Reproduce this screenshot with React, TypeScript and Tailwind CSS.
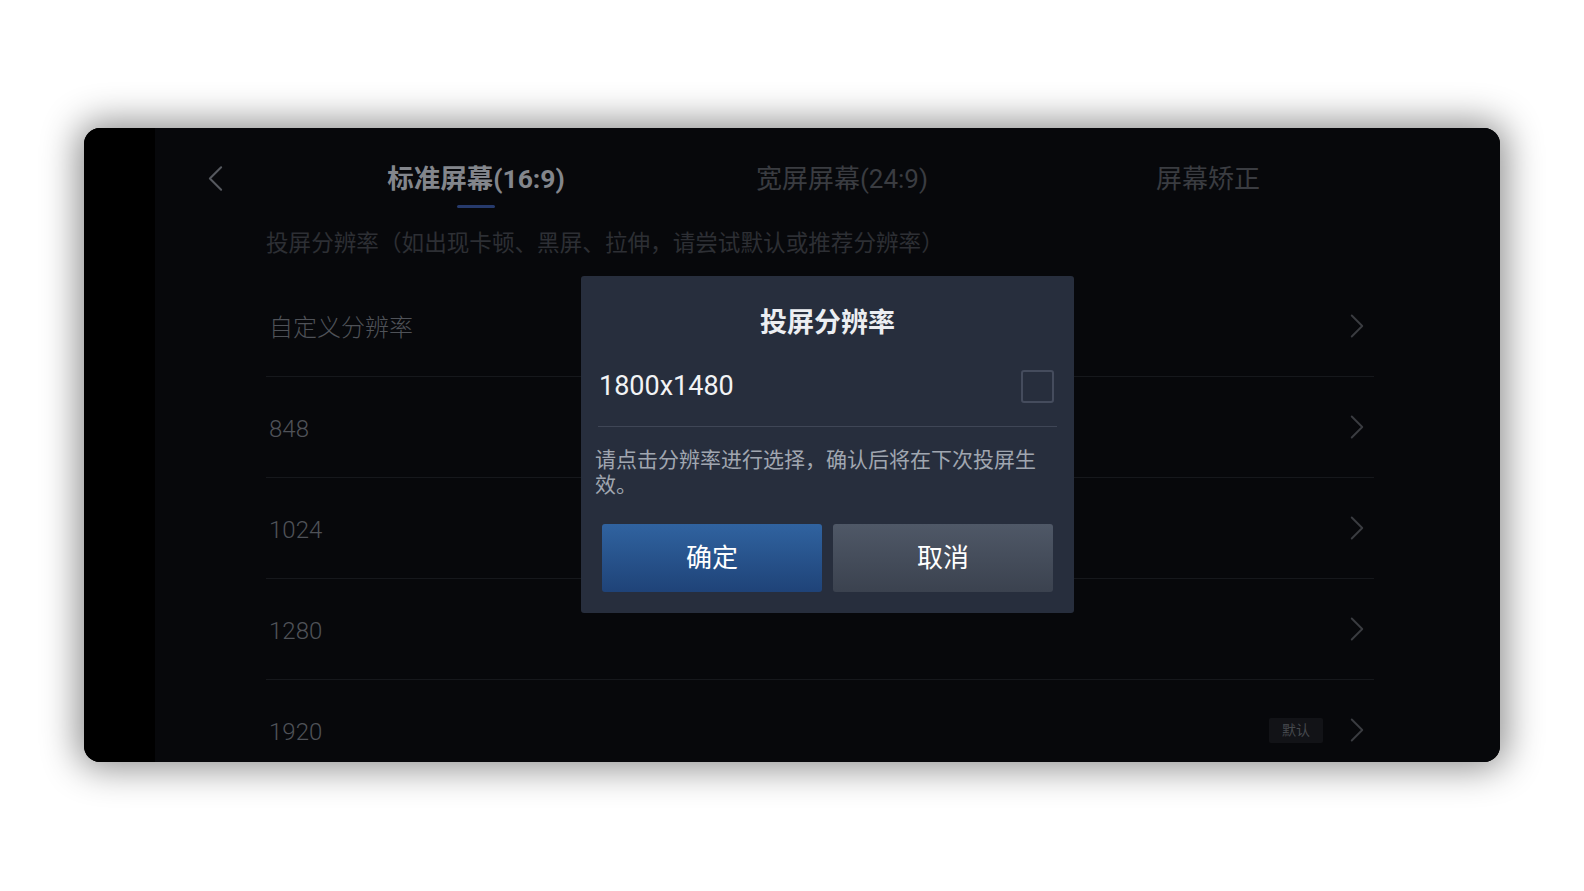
import React from "react";

const FONT = { fontFamily: 'Roboto, "Noto Sans CJK SC", "Noto Sans", sans-serif' };

const tabs = [
  { label: "标准屏幕(16:9)", active: true },
  { label: "宽屏屏幕(24:9)", active: false },
  { label: "屏幕矫正", active: false },
];

const rows = [
  { label: "自定义分辨率" },
  { label: "848" },
  { label: "1024" },
  { label: "1280" },
  { label: "1920", badge: "默认" },
];

function Chevron({ dir, className }: { dir: "left" | "right"; className?: string }) {
  return (
    <svg viewBox="0 0 16 28" className={className} fill="none" stroke="currentColor" strokeWidth={2.2} strokeLinecap="round" strokeLinejoin="round">
      {dir === "left" ? <path d="M14 2 L2 14 L14 26" /> : <path d="M2 2 L14 14 L2 26" />}
    </svg>
  );
}

function ResolutionDialog() {
  return (
    <div className="absolute left-[426px] top-[148px] flex w-[493px] flex-col rounded-[3px] bg-[#272e3d] px-[17px] pb-[21px]">
      <div className="pt-[29px] text-center text-[27px] font-bold leading-[36px] text-[#eceef2]">投屏分辨率</div>
      <div className="mt-[27px] flex items-center justify-between border-b border-[#3f4656] pb-[22px] pl-[1px] pr-[3px]">
        <span className="text-[27px] leading-[36px] text-[#f2f3f5]">1800x1480</span>
        <span className="h-[33px] w-[33px] rounded-[3px] border-2 border-[#454c5d]" />
      </div>
      <p className="-ml-[3px] mt-[21px] text-[21px] leading-[25px] text-[#a0a6b0]">
        请点击分辨率进行选择，确认后将在下次投屏生效。
      </p>
      <div className="mt-[26px] flex gap-[11px] px-[4px]">
        <button className="h-[68px] flex-1 rounded-[3px] bg-gradient-to-b from-[#3063a0] to-[#1f4378] text-[26px] text-white">
          确定
        </button>
        <button className="h-[68px] flex-1 rounded-[3px] bg-gradient-to-b from-[#4f5867] to-[#3b424f] text-[26px] text-white">
          取消
        </button>
      </div>
    </div>
  );
}

export default function App() {
  return (
    <div className="h-[891px] w-[1584px] overflow-hidden bg-white pl-[84px] pt-[128px]" style={FONT}>
      <div className="flex h-[634px] w-[1416px] overflow-hidden rounded-[16px] bg-black shadow-[0_0_36px_6px_rgba(0,0,0,0.45)]">
        <div className="w-[71px] shrink-0 bg-black" />
        <div className="relative flex flex-1 flex-col bg-[#07080b]">
          <div className="flex h-[86px] shrink-0 items-start">
            <div className="w-[138px] shrink-0 pl-[53px] pt-[37px]">
              <Chevron dir="left" className="h-[27px] w-[15px] text-[#55585e]" />
            </div>
            {tabs.map((t) => (
              <div key={t.label} className="flex w-[366px] flex-col items-center pt-[33px]">
                <span
                  className={
                    t.active
                      ? "text-[26.5px] font-bold leading-[36px] text-[#83868c]"
                      : "text-[26px] leading-[36px] text-[#3a3c41]"
                  }
                >
                  {t.label}
                </span>
                {t.active && <span className="mt-[8px] h-[3px] w-[38px] rounded-full bg-[#263a6c]" />}
              </div>
            ))}
          </div>
          <div className="mt-[15px] pl-[111px] text-[22.6px] leading-[30px] text-[#2d2f34]">
            投屏分辨率（如出现卡顿、黑屏、拉伸，请尝试默认或推荐分辨率）
          </div>
          <div className="mt-[17px] flex flex-col pl-[111px] pr-[126px]">
            {rows.map((r) => (
              <div key={r.label} className="flex h-[101px] shrink-0 items-center border-b border-[#16181c]">
                <span className="flex-1 pl-[3px] pt-[3px] text-[24px] font-light text-[#4f5258]">{r.label}</span>
                {r.badge && (
                  <span className="mr-[27px] flex h-[25px] w-[54px] items-center justify-center rounded-[2px] bg-[#121317] text-[14px] text-[#45484d]">
                    {r.badge}
                  </span>
                )}
                <Chevron dir="right" className="mr-[10px] h-[28px] w-[14px] text-[#3a3c41]" />
              </div>
            ))}
          </div>
          <ResolutionDialog />
        </div>
      </div>
    </div>
  );
}
